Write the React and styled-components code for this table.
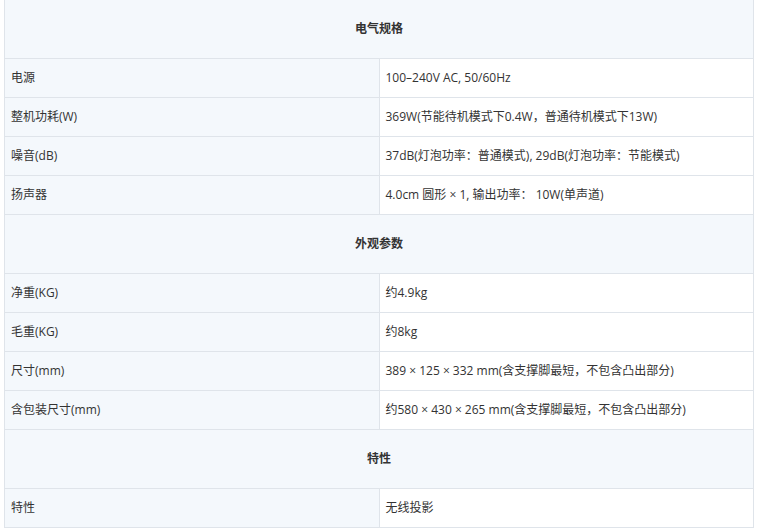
import React from 'react'
import styled, { createGlobalStyle } from 'styled-components'

const sections = [
    {
        title: '电气规格',
        rows: [
            ['电源', '100–240V AC, 50/60Hz'],
            ['整机功耗(W)', '369W(节能待机模式下0.4W，普通待机模式下13W)'],
            ['噪音(dB)', '37dB(灯泡功率：普通模式), 29dB(灯泡功率：节能模式)'],
            ['扬声器', '4.0cm 圆形 × 1, 输出功率： 10W(单声道)'],
        ],
    },
    {
        title: '外观参数',
        rows: [
            ['净重(KG)', '约4.9kg'],
            ['毛重(KG)', '约8kg'],
            ['尺寸(mm)', '389 × 125 × 332 mm(含支撑脚最短，不包含凸出部分)'],
            ['含包装尺寸(mm)', '约580 × 430 × 265 mm(含支撑脚最短，不包含凸出部分)'],
        ],
    },
    {
        title: '特性',
        rows: [['特性', '无线投影']],
    },
]

export default function App() {
    return (
        <>
            <GlobalStyle />
            <Page>
                <Table>
                    <tbody>
                        {sections.map((s) => (
                            <React.Fragment key={s.title}>
                                <tr>
                                    <Head colSpan={2}>{s.title}</Head>
                                </tr>
                                {s.rows.map(([k, v]) => (
                                    <tr key={k}>
                                        <Label>{k}</Label>
                                        <Value>{v}</Value>
                                    </tr>
                                ))}
                            </React.Fragment>
                        ))}
                    </tbody>
                </Table>
            </Page>
        </>
    )
}

const GlobalStyle = createGlobalStyle`
    body {
        margin: 0;
        background: #fff;
        font-family: "Open Sans", "Noto Sans CJK SC", sans-serif;
        color: #333;
    }
`
const Page = styled.div`
    padding: 0 4px;
    margin-top: -1px;
`
const Table = styled.table`
    width: 750px;
    border-collapse: collapse;
    table-layout: fixed;
    font-size: 12px;
`
const Cell = styled.td`
    border: 1px solid #dfe4ea;
    padding: 0 6px;
    height: 39px;
    box-sizing: border-box;
    vertical-align: middle;
    line-height: 16px;
`
const Head = styled(Cell)`
    background: #f4f8fc;
    height: 59px;
    text-align: center;
    font-weight: bold;
`
const Label = styled(Cell)`
    width: 50%;
    background: #f4f8fc;
`
const Value = styled(Cell)`
    background: #fff;
`
